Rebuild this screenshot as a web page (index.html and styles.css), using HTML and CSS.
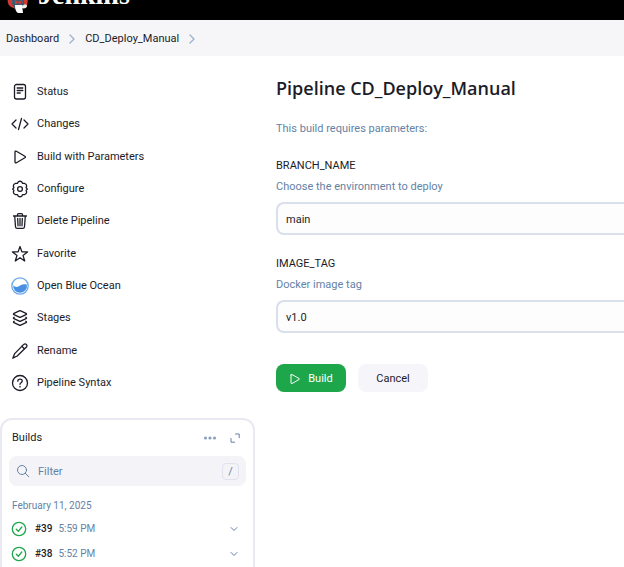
FILE: index.html
```html
<!DOCTYPE html>
<html lang="en">
<head>
<meta charset="utf-8">
<meta name="viewport" content="width=device-width, initial-scale=1">
<title>Pipeline CD_Deploy_Manual - Jenkins</title>
<link rel="stylesheet" href="styles.css">
</head>
<body>
<header class="header">
  <a class="brand" href="#">
    <svg class="brand-logo" viewBox="0 0 24 32" aria-hidden="true">
      <path d="M3 14C2 4 7 0 12 0s10 5 8 14l-2 6H6z" fill="#f0d6b7"/>
      <path d="M2 16l6 3 2 8-5-2c-3-2-4-5-3-9z" fill="#d33833"/>
      <path d="M6 16l5 2 8-3 2 4-2 5-10 3-3-5z" fill="#3f5a6e"/>
      <path d="M9 18l3 2 4-2-1 4-3-1-3 1z" fill="#d33833"/>
      <path d="M18 14l4 3-1 7-3-2z" fill="#d33833"/>
      <path d="M9 23h7l1 8h-5c-2-1-3-4-3-8z" fill="#fff"/>
      <path d="M16 24c2-2 5-2 5 0s-3 3-5 2z" fill="#f3eee6"/>
    </svg>
    <span class="brand-name">Jenkins</span>
  </a>
</header>

<nav class="breadcrumbs" aria-label="Breadcrumb">
  <a href="#">Dashboard</a>
  <svg class="crumb-arrow" viewBox="0 0 8 12" aria-hidden="true"><path d="M2 2l4 4-4 4"/></svg>
  <a href="#">CD_Deploy_Manual</a>
  <svg class="crumb-arrow" viewBox="0 0 8 12" aria-hidden="true"><path d="M2 2l4 4-4 4"/></svg>
</nav>

<div class="page">
  <aside class="sidebar">
    <nav class="tasks" aria-label="Pipeline tasks">
      <a class="task" href="#">
        <svg class="icon" viewBox="0 0 18 18" aria-hidden="true"><rect x="3.500" y="1.500" width="11" height="14.500" rx="2"/><path d="M6.200 5h5.600M6.200 7.500h5.600M6.200 10h3"/></svg>
        Status</a>
      <a class="task" href="#">
        <svg class="icon" viewBox="0 0 18 18" aria-hidden="true"><path d="M5 5L1 9l4 4M13 5l4 4-4 4M10.500 3.500l-3 11"/></svg>
        Changes</a>
      <a class="task" href="#">
        <svg class="icon" viewBox="0 0 18 18" aria-hidden="true"><path d="M4 4v10c0 .8.700 1.200 1.400.8l8.500-5c.7-.4.7-1.200 0-1.600l-8.500-5C4.700 2.800 4 3.200 4 4z"/></svg>
        Build with Parameters</a>
      <a class="task" href="#">
        <svg class="icon" viewBox="0 0 18 18" aria-hidden="true"><circle cx="9" cy="9" r="2.400"/><path d="M7.300 1.800Q9 .7 10.700 1.800L11.600 3.300 13.500 3.400Q15.600 4 15.700 6L15.100 7.600 16.300 9 15.100 10.400 15.700 12Q15.600 14 13.500 14.600L11.600 14.700 10.700 16.200Q9 17.300 7.300 16.200L6.400 14.700 4.500 14.600Q2.400 14 2.300 12L2.900 10.400 1.700 9 2.900 7.600 2.300 6Q2.400 4 4.500 3.400L6.400 3.300z"/></svg>
        Configure</a>
      <a class="task" href="#">
        <svg class="icon" viewBox="0 0 18 18" aria-hidden="true"><path d="M3.700 4l.8 10.700c.1 1 .7 1.600 1.600 1.600h5.800c.9 0 1.500-.6 1.600-1.600L14.300 4M2.500 4h13M6.500 4V2.600c0-.6.4-1 1-1h3c.6 0 1 .4 1 1V4M6.700 6.500l.3 7.300M9 6.500v7.300M11.300 6.500l-.3 7.300"/></svg>
        Delete Pipeline</a>
      <a class="task" href="#">
        <svg class="icon" viewBox="0 0 18 18" aria-hidden="true"><path d="M9 1.500l1.900 5.400h5.600l-4.500 3.500 1.700 5.600L9 12.700 4.300 16 6 10.400 1.500 6.900h5.600z"/></svg>
        Favorite</a>
      <a class="task" href="#">
        <svg class="icon icon-ocean" viewBox="0 0 18 18" aria-hidden="true"><circle cx="9" cy="9" r="8.200"/><path class="wave" d="M2.200 8.500c2 1.700 4 1.800 6 .5s3.600-2.500 7.600-1.500A6.800 6.800 0 0 1 9 15.800 6.800 6.800 0 0 1 2.200 8.500z"/></svg>
        Open Blue Ocean</a>
      <a class="task" href="#">
        <svg class="icon" viewBox="0 0 18 18" aria-hidden="true"><path d="M8.300 1.900Q9 1.600 9.700 1.900L15 4.300Q16 5 15 5.700L9.700 8.100Q9 8.400 8.300 8.100L3 5.700Q2 5 3 4.300zM3.200 8.200Q1.800 9 3 9.700L8.300 12.100Q9 12.400 9.700 12.100L15 9.700Q16.200 9 14.800 8.200M3.200 12.200Q1.800 13 3 13.700L8.300 16.100Q9 16.400 9.700 16.100L15 13.700Q16.200 13 14.800 12.200"/></svg>
        Stages</a>
      <a class="task" href="#">
        <svg class="icon" viewBox="0 0 18 18" aria-hidden="true"><path d="M12.500 2.600c1-1 2-1 2.900-.2s.8 1.900-.2 2.900L6.200 14l-4.400 2.200L3.700 11.600zM10.800 4.300L13.500 7"/></svg>
        Rename</a>
      <a class="task" href="#">
        <svg class="icon" viewBox="0 0 18 18" aria-hidden="true"><circle cx="9" cy="9" r="7.500"/><path d="M6.800 7.200C6.800 4.500 11.200 4.500 11.200 7c0 1.700-2.200 1.700-2.200 3.300M9 12.300v.8"/></svg>
        Pipeline Syntax</a>
    </nav>

    <section class="builds" aria-labelledby="builds-title">
      <div class="builds-head">
        <h2 id="builds-title">Builds</h2>
        <button class="icon-button" type="button" aria-label="More actions"><svg viewBox="0 0 14 14" aria-hidden="true"><circle cx="2.500" cy="7" r="1.600"/><circle cx="7" cy="7" r="1.600"/><circle cx="11.500" cy="7" r="1.600"/></svg></button>
        <button class="icon-button" type="button" aria-label="Expand"><svg viewBox="0 0 14 14" aria-hidden="true"><path d="M7.500 3h3.700v3.700M3 7.500v3.700h3.700"/></svg></button>
      </div>
      <div class="filter">
        <svg class="filter-icon" viewBox="0 0 14 14" aria-hidden="true"><circle cx="6" cy="6" r="4.500"/><path d="M9.300 9.300l3.500 3.500"/></svg>
        <input type="search" placeholder="Filter" aria-label="Filter">
        <kbd>/</kbd>
      </div>
      <h3 class="build-date">February 11, 2025</h3>
      <ul class="build-list">
        <li class="build">
          <svg class="build-status" viewBox="0 0 16 16" role="img" aria-label="Success"><circle cx="8" cy="8" r="6.700"/><path d="M5.300 8.300l2 2 3.500-4.300"/></svg>
          <a href="#">#39</a><time>5:59 PM</time>
          <button class="icon-button" type="button" aria-label="Build #39 menu"><svg viewBox="0 0 14 14" aria-hidden="true"><path d="M4 5.500l3 3 3-3"/></svg></button>
        </li>
        <li class="build">
          <svg class="build-status" viewBox="0 0 16 16" role="img" aria-label="Success"><circle cx="8" cy="8" r="6.700"/><path d="M5.300 8.300l2 2 3.500-4.300"/></svg>
          <a href="#">#38</a><time>5:52 PM</time>
          <button class="icon-button" type="button" aria-label="Build #38 menu"><svg viewBox="0 0 14 14" aria-hidden="true"><path d="M4 5.500l3 3 3-3"/></svg></button>
        </li>
      </ul>
    </section>
  </aside>

  <main class="main">
    <h1>Pipeline CD_Deploy_Manual</h1>
    <p class="intro">This build requires parameters:</p>
    <form>
      <div class="field">
        <label for="branch">BRANCH_NAME</label>
        <p id="branch-help">Choose the environment to deploy</p>
        <input id="branch" type="text" value="main" aria-describedby="branch-help">
      </div>
      <div class="field">
        <label for="tag">IMAGE_TAG</label>
        <p id="tag-help">Docker image tag</p>
        <input id="tag" type="text" value="v1.0" aria-describedby="tag-help">
      </div>
      <div class="actions">
        <button class="button primary" type="submit"><svg viewBox="0 0 12 12" aria-hidden="true"><path d="M2 2v8c0 .5.500.8 1 .5l7-4c.5-.3.500-.7 0-1l-7-4C2.500 1.200 2 1.500 2 2z"/></svg>Build</button>
        <button class="button" type="button">Cancel</button>
      </div>
    </form>
  </main>
</div>
</body>
</html>
```
FILE: styles.css
```css
:root {
  --text: #1c1c28;
  --muted: #6482a6;
  --line: #d9dfeb;
  --surface: #f6f6f9;
  --green: #1ea64b;
}

* {
  box-sizing: border-box;
}

body {
  display: flex;
  flex-direction: column;
  min-height: 100vh;
  margin: 0;
  background: #fff;
  color: var(--text);
  font: 11px/16px Roboto, "Open Sans", sans-serif;
}

h1, h2, h3, p, ul {
  margin: 0;
  padding: 0;
}

a {
  color: inherit;
  text-decoration: none;
}

button, input {
  font: inherit;
  color: inherit;
}

svg {
  flex: none;
  fill: none;
  stroke: currentColor;
  stroke-linecap: round;
  stroke-linejoin: round;
}

.header {
  display: flex;
  align-items: flex-end;
  height: 20px;
  padding: 0 6px 6px;
  overflow: hidden;
  background: #000;
}

.brand {
  display: flex;
  align-items: flex-end;
  gap: 8px;
  color: #fff;
}

.brand-logo {
  width: 24px;
  height: 32px;
  stroke: none;
}

.brand-name {
  font: bold 28px/38px "Liberation Serif", serif;
}

.breadcrumbs {
  display: flex;
  align-items: center;
  gap: 9px;
  height: 36px;
  padding: 2px 6px 0;
  background: var(--surface);
}

.crumb-arrow {
  width: 8px;
  height: 12px;
  color: #9db2cc;
  stroke-width: 1.4;
}

.page {
  display: grid;
  flex: 1;
  grid-template-columns: 255px 1fr;
  gap: 21px;
}

.sidebar {
  display: flex;
  flex-direction: column;
  padding-top: 20px;
}

.tasks {
  display: grid;
  grid-auto-rows: 1fr;
  min-height: 323px;
  padding: 0 11px;
}

.task {
  display: flex;
  align-items: center;
  gap: 8px;
}

.icon {
  width: 18px;
  height: 18px;
  stroke-width: 1.3;
}

.icon-ocean {
  color: #6aa8ea;
}

.wave {
  fill: #4a90e2;
  stroke: none;
}

.builds {
  flex: 1;
  margin-top: 19px;
  padding: 10px 7px 0;
  border: 2px solid #e9e9f2;
  border-bottom: 0;
  border-radius: 12px 12px 0 0;
}

.builds-head {
  display: flex;
  align-items: center;
  gap: 11px;
  padding: 0 4px 0 3px;
}

.builds-head h2 {
  flex: 1;
  font-size: 11px;
  font-weight: 400;
}

.icon-button {
  display: flex;
  padding: 0;
  border: 0;
  background: none;
  color: var(--muted);
}

.icon-button svg {
  width: 14px;
  height: 14px;
}

.icon-button circle {
  fill: #8ba2bf;
  stroke: none;
}

.filter {
  display: flex;
  align-items: center;
  gap: 8px;
  height: 30px;
  margin-top: 10px;
  padding: 0 7px;
  border-radius: 8px;
  background: #f3f3f8;
  color: var(--muted);
}

.filter-icon {
  width: 14px;
  height: 14px;
}

.filter input {
  flex: 1;
  min-width: 0;
  padding: 2px 0 0;
  border: 0;
  outline: 0;
  background: none;
}

.filter input::placeholder {
  color: var(--muted);
}

.filter kbd {
  width: 17px;
  border: 1px solid #e0e3ee;
  border-radius: 4px;
  font: inherit;
  line-height: 15px;
  text-align: center;
}

.build-date {
  margin-top: 12px;
  padding-left: 3px;
  color: var(--muted);
  font-size: 10px;
  font-weight: 400;
}

.build-list {
  margin-top: 2px;
  list-style: none;
}

.build {
  display: flex;
  align-items: center;
  height: 25px;
  padding: 0 5px 0 2px;
  font-size: 10px;
}

.build a {
  margin: 0 6px 0 8px;
  font-weight: 500;
}

.build time {
  flex: 1;
  color: var(--muted);
}

.build-status {
  width: 16px;
  height: 16px;
  color: var(--green);
  stroke-width: 1.3;
}

.main {
  padding-top: 20px;
}

h1 {
  font: 600 18px/24px "Open Sans", sans-serif;
}

.intro {
  margin-top: 21px;
  color: var(--muted);
}

.field {
  margin-top: 21px;
}

.field label {
  display: block;
}

.field p {
  margin-top: 5px;
  color: var(--muted);
}

.field input {
  display: block;
  width: 100%;
  height: 33px;
  margin-top: 7px;
  padding: 2px 8px 0;
  border: 2px solid var(--line);
  border-right: 0;
  border-radius: 8px 0 0 8px;
  outline: 0;
  background: #fdfdfd;
}

.actions {
  display: flex;
  gap: 12px;
  margin-top: 31px;
}

.button {
  display: flex;
  align-items: center;
  justify-content: center;
  gap: 7px;
  min-width: 70px;
  height: 28px;
  padding: 1px 12px 0;
  border: 0;
  border-radius: 8px;
  background: #f6f6fa;
}

.primary {
  background: var(--green);
  color: #fff;
}

.button svg {
  width: 12px;
  height: 12px;
}
```
